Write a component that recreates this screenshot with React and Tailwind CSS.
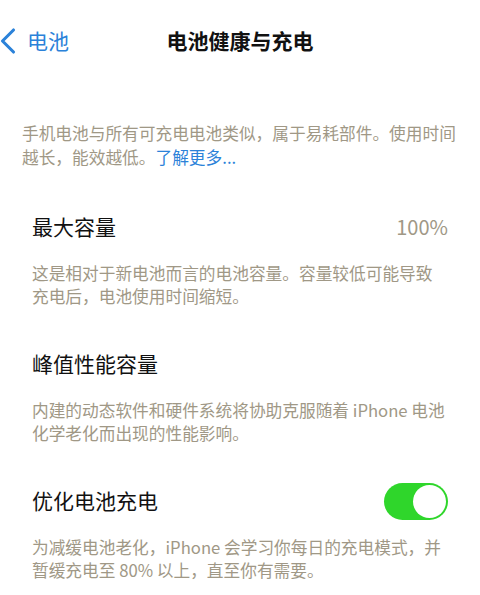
import { ChevronLeft } from "lucide-react";

const font = { fontFamily: '"Noto Sans CJK SC", "Noto Sans", sans-serif' };

function Toggle({ on }) {
  return (
    <div
      className={`flex h-[37px] w-[64px] items-center rounded-full p-[2px] ${
        on ? "justify-end bg-[#2fd62b]" : "justify-start bg-[#e5e5ea]"
      }`}
    >
      <div className="h-[33px] w-[33px] rounded-full bg-white" />
    </div>
  );
}

function Section({ title, right, lines }) {
  return (
    <div className="px-[32px]">
      <div className="flex h-[40px] items-center justify-between">
        <span className="text-[21px] text-[#111]">{title}</span>
        {right}
      </div>
      <p className="mt-[15px] whitespace-nowrap text-[16.7px] leading-[22.5px] text-[#a09886]">
        {lines[0]}
        <br />
        {lines[1]}
      </p>
    </div>
  );
}

export default function App() {
  return (
    <div className="h-[595px] w-[480px] overflow-hidden bg-white" style={font}>
      {/* 导航栏 */}
      <div className="relative flex h-[82px] items-center justify-center">
        <div className="absolute left-0 top-[19px] flex items-center text-[#2b82d9]">
          <ChevronLeft size={44} strokeWidth={1.7} className="-ml-[14px]" />
          <span className="-ml-[3px] text-[21px]">电池</span>
        </div>
        <h1 className="text-[21px] font-bold text-[#111]">电池健康与充电</h1>
      </div>

      <p className="mt-[39px] whitespace-nowrap px-[22px] text-[16.7px] leading-[24px] text-[#a09886]">
        手机电池与所有可充电电池类似，属于易耗部件。使用时间
        <br />
        越长，能效越低。<span className="text-[#2b82d9]">了解更多...</span>
      </p>

      <div className="mt-[38px] flex flex-col gap-[37px]">
        <Section
          title="最大容量"
          right={<span className="text-[20px] text-[#a09886]">100%</span>}
          lines={["这是相对于新电池而言的电池容量。容量较低可能导致", "充电后，电池使用时间缩短。"]}
        />
        <Section
          title="峰值性能容量"
          lines={["内建的动态软件和硬件系统将协助克服随着 iPhone 电池", "化学老化而出现的性能影响。"]}
        />
        <Section
          title="优化电池充电"
          right={<Toggle on />}
          lines={["为减缓电池老化，iPhone 会学习你每日的充电模式，并", "暂缓充电至 80% 以上，直至你有需要。"]}
        />
      </div>
    </div>
  );
}
